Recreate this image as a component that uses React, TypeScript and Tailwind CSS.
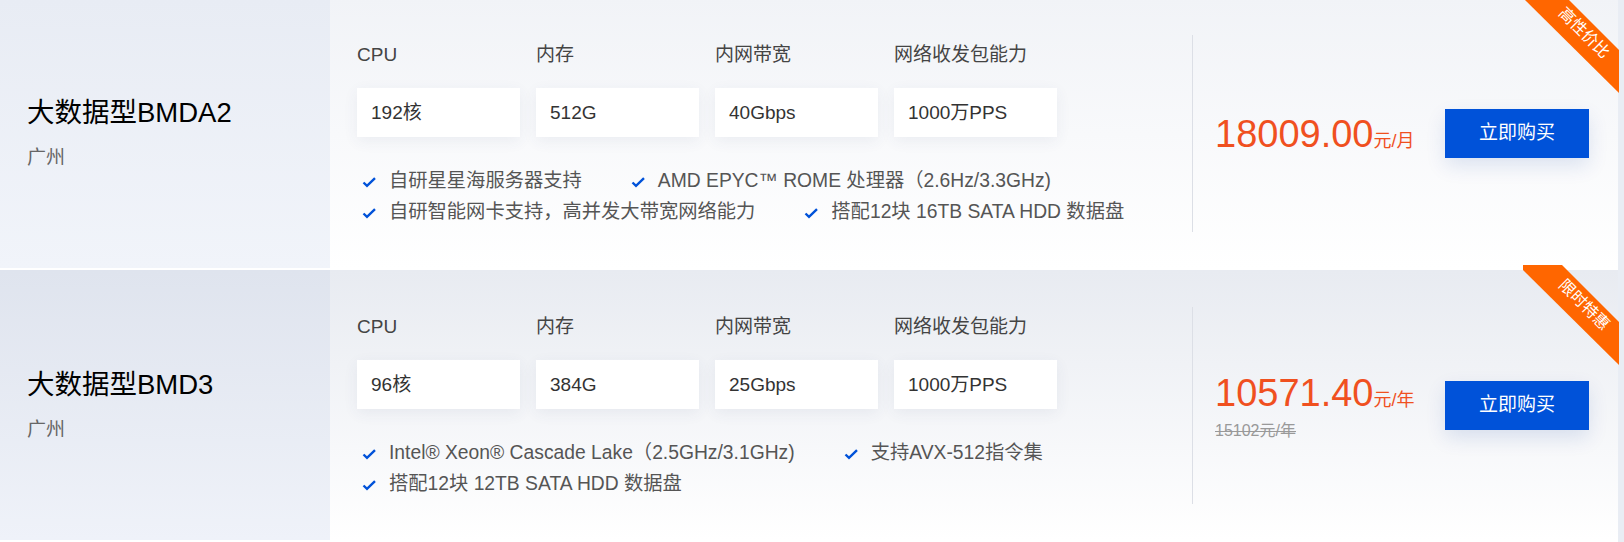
import React from "react"

type Product = {
  name: string
  region: string
  specs: { label: string; value: string }[]
  features: string[]
  price: string
  unit: string
  original?: string
  tag: string
  active?: boolean
}

const products: Product[] = [
  {
    name: "大数据型BMDA2",
    region: "广州",
    specs: [
      { label: "CPU", value: "192核" },
      { label: "内存", value: "512G" },
      { label: "内网带宽", value: "40Gbps" },
      { label: "网络收发包能力", value: "1000万PPS" },
    ],
    features: [
      "自研星星海服务器支持",
      "AMD EPYC™ ROME 处理器（2.6Hz/3.3GHz)",
      "自研智能网卡支持，高并发大带宽网络能力",
      "搭配12块 16TB SATA HDD 数据盘",
    ],
    price: "18009.00",
    unit: "元/月",
    tag: "高性价比",
  },
  {
    name: "大数据型BMD3",
    region: "广州",
    specs: [
      { label: "CPU", value: "96核" },
      { label: "内存", value: "384G" },
      { label: "内网带宽", value: "25Gbps" },
      { label: "网络收发包能力", value: "1000万PPS" },
    ],
    features: [
      "Intel® Xeon® Cascade Lake（2.5GHz/3.1GHz)",
      "支持AVX-512指令集",
      "搭配12块 12TB SATA HDD 数据盘",
    ],
    price: "10571.40",
    unit: "元/年",
    original: "15102元/年",
    tag: "限时特惠",
    active: true,
  },
]

function Check() {
  return (
    <svg width="16" height="16" viewBox="0 0 16 16" className="ml-[4px] mr-[12px] shrink-0">
      <path d="M2.5 8.5 L6 11.8 L14 4.2" fill="none" stroke="#0052d9" strokeWidth="2.4" />
    </svg>
  )
}

function Ribbon({ text }: { text: string }) {
  return (
    <div className="absolute top-[-5px] right-[-1px] w-[96px] h-[100px] bg-[#ff6600] [clip-path:polygon(0_0,39px_0,100%_57px,100%_100%,0_5px)]">
      <span className="absolute left-[61px] top-[40px] -translate-x-1/2 -translate-y-1/2 rotate-45 whitespace-nowrap text-[16px] leading-none text-white">
        {text}
      </span>
    </div>
  )
}

function ProductCard({ product }: { product: Product }) {
  return (
    <div className="relative flex h-[270px]">
      {/* name + region */}
      <div
        className={`flex w-[330px] shrink-0 flex-col justify-center pl-[27px] bg-linear-to-b ${
          product.active ? "from-[#dfe4ee] to-[#eff2f9]" : "from-[#e8ecf4] to-[#f1f4fa]"
        }`}
      >
        <div className="text-[27.5px] leading-[36px] text-black">{product.name}</div>
        <div className="mt-[14px] text-[19px] leading-[26px] text-[#666]">{product.region}</div>
      </div>

      <div
        className={`flex flex-1 bg-linear-to-b ${
          product.active ? "from-[#e8ebf1] to-white" : "from-[#f1f3f7] to-white"
        }`}
      >
        {/* specs */}
        <div className="flex-1 pl-[27px] pt-[44px]">
          <div className="grid grid-cols-[repeat(4,163px)] gap-x-[16px]">
            {product.specs.map((s) => (
              <div key={s.label}>
                <div className="mb-[20px] text-[19px] leading-[26px] text-[#444]">{s.label}</div>
                <div className="h-[49px] bg-white pl-[14px] text-[19px] leading-[49px] text-[#333] shadow-[0_4px_14px_rgba(50,70,120,0.07)]">
                  {s.value}
                </div>
              </div>
            ))}
          </div>
          <div className="mt-[29px] flex flex-wrap gap-x-[44px]">
            {product.features.map((f) => (
              <div key={f} className="flex h-[31px] items-center text-[19.3px] text-[#555]">
                <Check />
                <span className="whitespace-nowrap">{f}</span>
              </div>
            ))}
          </div>
        </div>

        {/* price + buy */}
        <div className="flex h-[197px] w-[426px] shrink-0 items-center justify-between self-center border-l border-[#dcdfe6] pl-[22px] pr-[29px]">
          <div className="pt-[1px]">
            <div className="flex items-baseline text-[#f0501f]">
              <span className="text-[38px] leading-[44px]">{product.price}</span>
              <span className="text-[18px] leading-none">{product.unit}</span>
            </div>
            {product.original && (
              <div className="mt-[6px] text-[16px] leading-[20px] text-[#999] line-through">{product.original}</div>
            )}
          </div>
          <button className="h-[49px] w-[144px] bg-[#0052d9] text-[19px] text-white shadow-[0_8px_20px_rgba(0,60,160,0.12)]">
            立即购买
          </button>
        </div>
      </div>

      <Ribbon text={product.tag} />
    </div>
  )
}

export default function App() {
  return (
    <div className="flex min-h-screen bg-white font-['Liberation_Sans','Noto_Sans_CJK_SC',sans-serif]">
      <div className="-mt-[2px] flex w-[1618px] shrink-0 flex-col gap-[2px]">
        {products.map((p) => (
          <ProductCard key={p.name} product={p} />
        ))}
      </div>
      <div className="flex-1 bg-[#e9edf4]" />
    </div>
  )
}
